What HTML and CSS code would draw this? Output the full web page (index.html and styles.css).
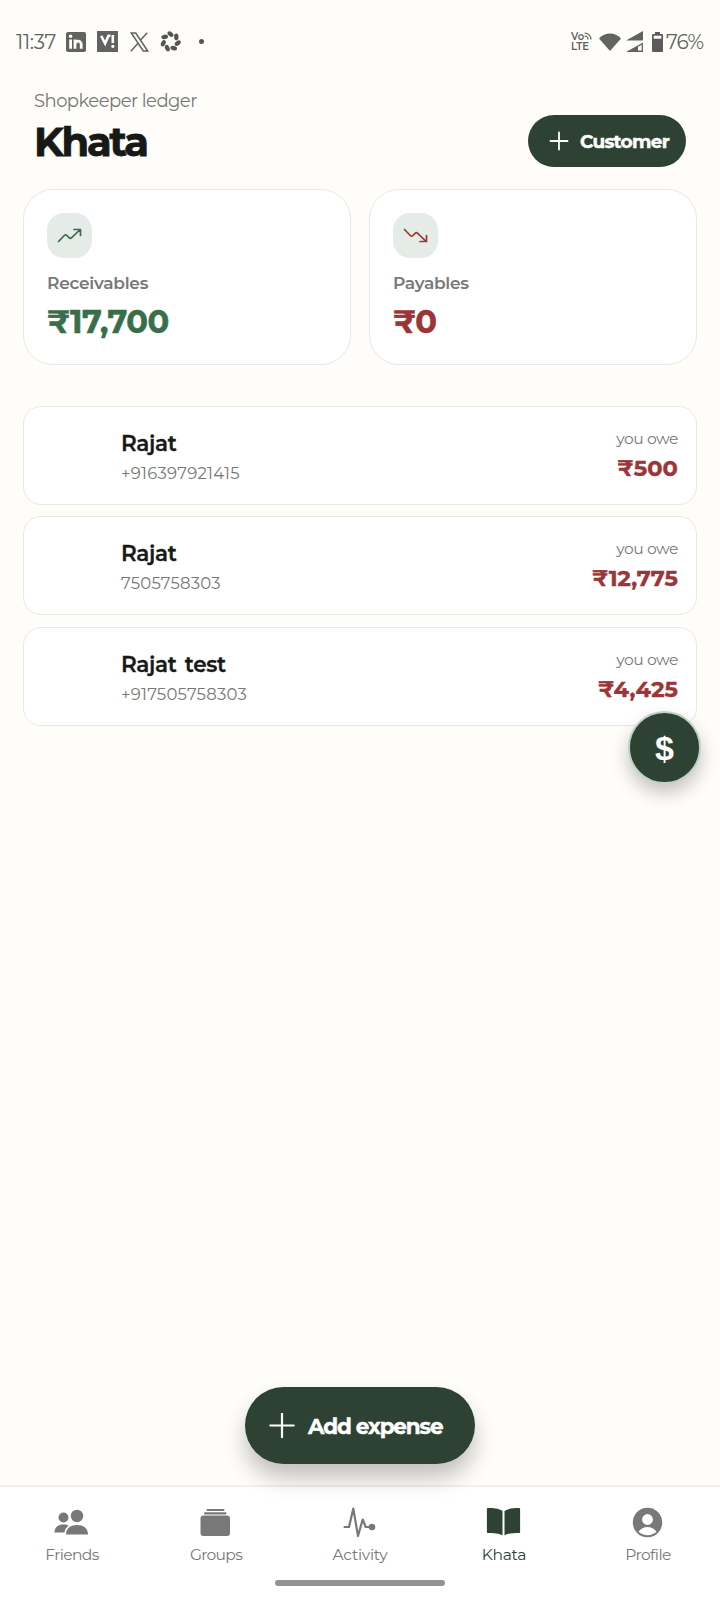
FILE: index.html
```html
<!DOCTYPE html>
<html lang="en">
<head>
<meta charset="utf-8">
<meta name="viewport" content="width=device-width, initial-scale=1">
<title>Khata</title>
<link rel="stylesheet" href="styles.css">
</head>
<body>
<div class="screen">
  <div class="status">
    <span class="time">11:37</span>
    <svg class="s-in" width="20" height="20" viewBox="0 0 20 20"><rect width="20" height="20" rx="2" fill="#626262"/><g stroke="#fefdf9" stroke-width="2.800" fill="none"><path d="M4.600 7.500v9.200M9 7.500v9.200M9 12.500c0-4.500 6.200-4.700 6.200 0v4.200"/></g><circle cx="4.600" cy="4.300" r="1.700" fill="#fefdf9"/></svg>
    <svg class="s-vi" width="21" height="21" viewBox="0 0 21 21"><rect width="21" height="21" fill="#626262"/><g stroke="#fefdf9" stroke-width="2.600" fill="none"><path d="M4.200 4.800l3.900 7.700 3.400-7.700h2"/><path d="M15.800 4v8"/></g><circle cx="15.800" cy="15.300" r="1.600" fill="#fefdf9"/></svg>
    <svg class="s-x" width="19" height="20" viewBox="0 0 19 20" fill="none" stroke="#626262" stroke-width="1.500"><path d="M1.300 1h4.400l12 18h-4.400zM17.200.8l-7.300 8M8 11.200L.9 19.200"/></svg>
    <svg class="s-flower" width="21" height="21" viewBox="-10.500 -10.500 21 21" fill="#555"><ellipse cx="0" cy="-7.400" rx="3.400" ry="2.200" transform="rotate(40 0 -7.400)"/><ellipse cx="0" cy="-7.400" rx="3.400" ry="2.200" transform="rotate(51.400) rotate(40 0 -7.400)"/><ellipse cx="0" cy="-7.400" rx="3.400" ry="2.200" transform="rotate(102.900) rotate(40 0 -7.400)"/><ellipse cx="0" cy="-7.400" rx="3.400" ry="2.200" transform="rotate(154.300) rotate(40 0 -7.400)"/><ellipse cx="0" cy="-7.400" rx="3.400" ry="2.200" transform="rotate(205.700) rotate(40 0 -7.400)"/><ellipse cx="0" cy="-7.400" rx="3.400" ry="2.200" transform="rotate(257.100) rotate(40 0 -7.400)"/><ellipse cx="0" cy="-7.400" rx="3.400" ry="2.200" transform="rotate(308.600) rotate(40 0 -7.400)"/></svg>
    <span class="dot"></span>
    <span class="volte"><span class="vo">Vo<svg width="8" height="8" viewBox="0 0 8 8" fill="none" stroke="#626262" stroke-width="1.200"><path d="M.5 1a6.500 6.500 0 0 1 6.500 6.500M.5 4A3.500 3.500 0 0 1 4 7.500"/></svg></span><span>LTE</span></span>
    <svg class="s-wifi" width="22" height="18" viewBox="0 0 22 18" fill="#626262"><path d="M0 5.500C6-1.300 16-1.300 22 5.500L11 18z"/></svg>
    <svg class="s-signal" width="18" height="22" viewBox="0 0 18 22" fill="#626262"><path d="M17 0v9.500H0zM17 11.500V21H0z"/><path d="M12 15.800l3.700-2v5.700H12z" fill="#fefdf9"/></svg>
    <svg class="s-battery" width="11" height="20" viewBox="0 0 11 20"><path d="M3 0h5v2h2q1 0 1 1v16q0 1-1 1H1q-1 0-1-1V3q0-1 1-1h2z" fill="#5b5b5b"/><path d="M1.700 3.700h7.600v3H1.700z" fill="#fefdf9"/></svg>
    <span class="percent">76%</span>
  </div>

  <header class="header">
    <div>
      <div class="eyebrow">Shopkeeper ledger</div>
      <h1 class="title">Khata</h1>
    </div>
    <button class="customer"><svg width="20" height="20" viewBox="0 0 20 20" stroke="#fff" stroke-width="1.800" stroke-linecap="round"><path d="M1.500 10h17M10 1.500v17"/></svg><span>Customer</span></button>
  </header>

  <section class="summary">
    <div class="stat">
      <div class="tile"><svg width="45" height="45" viewBox="0 0 45 45" fill="none" stroke="#3a6e4b" stroke-width="1.700" stroke-linecap="round" stroke-linejoin="round"><path d="M11.500 28.500l5.800-6q1.300-1.300 2.600 0l2.200 2.200q1.300 1.300 2.600 0l8.500-8.200M27 16.500h6.500v6"/></svg></div>
      <div class="stat-label">Receivables</div>
      <div class="stat-value green">₹17,700</div>
    </div>
    <div class="stat">
      <div class="tile"><svg width="45" height="45" viewBox="0 0 45 45" fill="none" stroke="#9b3b35" stroke-width="1.700" stroke-linecap="round" stroke-linejoin="round"><path d="M11.500 16.500l5.800 6q1.300 1.300 2.600 0l2.200-2.200q1.300-1.300 2.600 0l8.500 8.200M27 28.500h6.500v-6"/></svg></div>
      <div class="stat-label">Payables</div>
      <div class="stat-value red">₹0</div>
    </div>
  </section>

  <main class="list">
    <div class="row">
      <div class="who"><div class="name">Rajat</div><div class="phone">+916397921415</div></div>
      <div class="owe"><div class="owe-label">you owe</div><div class="amount">₹500</div></div>
    </div>
    <div class="row">
      <div class="who"><div class="name">Rajat</div><div class="phone">7505758303</div></div>
      <div class="owe"><div class="owe-label">you owe</div><div class="amount">₹12,775</div></div>
    </div>
    <div class="row">
      <div class="who"><div class="name">Rajat test</div><div class="phone">+917505758303</div></div>
      <div class="owe"><div class="owe-label">you owe</div><div class="amount">₹4,425</div></div>
    </div>
  </main>

  <nav class="nav">
    <a class="tab friends"><svg width="36" height="32" viewBox="0 0 36 32" fill="#777877"><circle cx="9.500" cy="11.500" r="5"/><circle cx="23" cy="10" r="6.200"/><path d="M.5 26.500c0-5.500 4-8 9-8 2 0 4 .4 5.300 1.300-2.500 1.500-4 3.700-4.300 6.700z"/><path d="M12 28.500c0-6.500 5-9.500 11-9.500s11 3 11 9.500z"/></svg><span>Friends</span></a>
    <a class="tab groups"><svg width="36" height="32" viewBox="0 0 36 32" fill="#777877"><rect x="8.500" y="3" width="18" height="2" rx="1"/><rect x="6" y="6.300" width="22.500" height="2.200" rx="1"/><rect x="2.500" y="9.500" width="29.500" height="20.500" rx="3"/></svg><span>Groups</span></a>
    <a class="tab activity"><svg width="36" height="32" viewBox="0 0 36 32" fill="none" stroke="#777877" stroke-width="2.200" stroke-linecap="round" stroke-linejoin="round"><path d="M2.500 21H7l4.300-18.500L16 30l4.700-16.500 3 7.500h4"/><circle cx="30" cy="21" r="2.200" fill="#777877"/></svg><span>Activity</span></a>
    <a class="tab khata"><svg width="36" height="32" viewBox="0 0 36 32" fill="#2d4233"><path d="M16.500 5C12.500 2.300 7 2 1.900 2q-1 0-1 1v23q0 1 1 1c5.600 0 11.600.3 14.600 2.500zM18.500 5c4-2.700 9.500-3 14.600-3q1 0 1 1v23q0 1-1 1c-5.600 0-11.600.3-14.600 2.500z"/></svg><span>Khata</span></a>
    <a class="tab profile"><svg width="36" height="32" viewBox="0 0 36 32"><circle cx="17.500" cy="16.500" r="14.700" fill="#777877"/><circle cx="17.500" cy="13.500" r="5.400" fill="#fff"/><path d="M8.500 25.700c2-3.300 5.500-4.800 9-4.800s7 1.500 9 4.800c-2.500 2.300-5.600 3.500-9 3.500S11 28 8.500 25.700z" fill="#fff"/></svg><span>Profile</span></a>
    <div class="home-bar"></div>
  </nav>

  <button class="currency">$</button>
  <button class="add"><svg width="26" height="26" viewBox="0 0 26 26" stroke="#fff" stroke-width="2.200" stroke-linecap="round"><path d="M1.300 12.500h23.400M13 .8v23.400"/></svg><span>Add expense</span></button>
</div>
</body>
</html>
```
FILE: styles.css
```css
* { box-sizing: border-box; }
body { margin: 0; background: #fefdf9; font-family: Montserrat, Inter, "Liberation Sans", sans-serif; color: #171917; }
button { border: 0; padding: 0; font: inherit; color: #fff; background: #2d4233; }
svg { display: block; flex: none; }
span { white-space: nowrap; }
.screen { position: relative; width: 720px; height: 1600px; display: flex; flex-direction: column; overflow: hidden; }

.status { height: 83px; padding: 0 14px 0 16px; display: flex; align-items: center; color: #626262; font-size: 20px; line-height: 24px; font-weight: 400; }
.time { width: 50px; letter-spacing: -0.300px; }
.s-vi { margin-left: 11px; }
.s-x { margin-left: 12px; }
.s-flower { margin-left: 11px; }
.dot { width: 5px; height: 5px; margin-left: 18px; border-radius: 50%; background: #555; }
.volte { margin-left: auto; width: 20px; font-size: 10px; line-height: 10px; font-weight: 600; }
.volte span { display: flex; }
.s-wifi { margin-left: 8px; }
.s-signal { margin-left: 5px; }
.s-battery { margin-left: 8px; }
.percent { width: 40px; margin-left: 3px; letter-spacing: -0.800px; }

.header { height: 106px; padding: 6px 34px 0; display: flex; justify-content: space-between; }
.eyebrow { height: 24px; line-height: 25px; font-size: 18px; letter-spacing: -0.550px; color: #777877; }
.title { margin: 0; height: 56px; line-height: 57px; font-size: 40px; font-weight: 700; letter-spacing: -2.100px; -webkit-text-stroke: 0.800px; }
.customer { width: 158px; height: 52px; margin-top: 26px; padding-left: 21px; border-radius: 26px; display: flex; align-items: center; gap: 11px; font-size: 18.500px; font-weight: 700; letter-spacing: -0.700px; -webkit-text-stroke: 0.400px; }

.summary { padding: 0 23px; display: flex; gap: 18px; }
.stat { flex: 1; height: 176px; padding: 23px; background: #fff; border: 1px solid #e9e9e4; border-radius: 30px; }
.tile { width: 45px; height: 45px; border-radius: 17px; background: #e5ebe7; }
.stat-label { margin-top: 12.500px; height: 24.500px; line-height: 24px; font-size: 17px; font-weight: 600; letter-spacing: -0.250px; color: #777877; }
.stat-value { margin-top: 8px; height: 36px; line-height: 38px; font-size: 32px; font-weight: 700; letter-spacing: -0.400px; -webkit-text-stroke: 0.500px; }
.green { color: #3a6e4b; }
.red { color: #9b3537; }

.list { flex: 1; padding: 40.500px 23px 0; display: flex; flex-direction: column; gap: 11.600px; }
.row { height: 99px; padding: 21px 18px 0 97px; display: flex; justify-content: space-between; background: #fff; border: 1px solid #e9e9e4; border-radius: 18px; }
.name { height: 31px; line-height: 30px; font-size: 21.500px; font-weight: 600; letter-spacing: -0.300px; word-spacing: 2.500px; -webkit-text-stroke: 0.300px; }
.phone { height: 28px; line-height: 29px; font-size: 16.500px; letter-spacing: 0.240px; color: #777877; }
.owe { text-align: right; }
.owe-label { height: 21px; line-height: 21px; font-size: 15.500px; letter-spacing: -0.400px; color: #777877; }
.amount { margin-top: 5px; height: 28px; line-height: 28px; font-size: 22.500px; font-weight: 700; letter-spacing: 0.100px; color: #9b3537; -webkit-text-stroke: 0.400px; }

.nav { height: 115px; padding-top: 19px; display: grid; grid-template-columns: repeat(5, 1fr); grid-template-rows: 74px 6px; background: #fff; border-top: 2px solid #f1f0eb; }
.tab { display: flex; flex-direction: column; align-items: center; gap: 6px; color: #777877; font-size: 15.500px; line-height: 22px; }
.friends { letter-spacing: -0.650px; }
.groups { letter-spacing: -0.700px; }
.activity { letter-spacing: -0.250px; }
.khata { letter-spacing: -0.300px; color: #2d4233; }
.profile { letter-spacing: -0.550px; }
.home-bar { grid-column: 1 / -1; justify-self: center; width: 170px; height: 6px; border-radius: 3px; background: #929292; }

.currency { position: absolute; left: 628px; top: 711px; width: 73px; height: 73px; border: 2px solid #c0d2c7; border-radius: 50%; font-size: 34px; line-height: 68px; font-weight: 700; box-shadow: 0 9px 18px rgba(0,0,0,.23); font-family: "Liberation Sans", sans-serif; }
.add { position: absolute; left: 245px; top: 1387px; width: 230px; height: 77px; padding-left: 24px; border-radius: 39px; display: flex; align-items: center; gap: 13px; font-size: 21.500px; font-weight: 700; letter-spacing: -1.100px; -webkit-text-stroke: 0.400px; box-shadow: 0 14px 22px rgba(0,0,0,.24); }
```
